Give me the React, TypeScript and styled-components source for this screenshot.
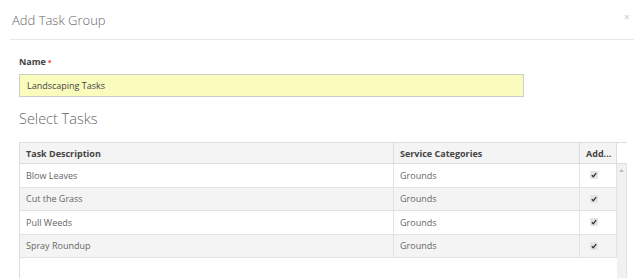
import React from 'react';
import styled, { createGlobalStyle } from 'styled-components';

const GlobalStyle = createGlobalStyle`
  html, body {
    margin: 0;
    padding: 0;
    background: #fff;
    font-family: "Open Sans", "Liberation Sans", sans-serif;
    color: #555;
  }
`;

const Modal = styled.div`
  width: 634px;
  height: 278px;
  overflow: hidden;
`;

const ModalHeader = styled.div`
  height: 40px;
  margin-left: 10px;
  border-bottom: 1px solid #e8e8e8;
  display: flex;
  align-items: center;
  justify-content: space-between;
  box-sizing: border-box;
`;

const ModalTitle = styled.h4`
  margin: 0 0 0 2px;
  font-size: 13px;
  font-weight: 300;
  color: #666;
`;

const CloseButton = styled.span`
  font-size: 11px;
  color: #ccc;
  margin-right: 4px;
  margin-top: -6px;
`;

const ModalBody = styled.div`
  padding: 15px 0 0 19px;
`;

const Label = styled.label`
  display: block;
  font-size: 9px;
  font-weight: 700;
  color: #444;
  margin-bottom: 6px;
`;

const Required = styled.span`
  color: #e55;
  margin-left: 2px;
`;

const TextInput = styled.input`
  display: block;
  box-sizing: border-box;
  width: 505px;
  height: 23px;
  padding: 0 7px;
  border: 1px solid #ccc;
  background: #f9fcbc;
  font-family: inherit;
  font-size: 9px;
  color: #444;
  outline: none;
`;

const SectionTitle = styled.h3`
  margin: 12px 0 14px;
  font-size: 14.5px;
  font-weight: 300;
  color: #666;
`;

const Grid = styled.div`
  width: 608px;
  height: 160px;
  box-sizing: border-box;
  border: 1px solid #ddd;
  border-right: 1px solid #e4e4e4;
  display: flex;
  flex-direction: column;
`;

const HeaderRow = styled.div`
  display: flex;
  height: 20px;
  border-bottom: 1px solid #ddd;
`;

const HeaderCell = styled.div<{ $w: number; $blank?: boolean }>`
  width: ${({ $w }) => $w}px;
  flex: none;
  box-sizing: border-box;
  padding-left: 6px;
  display: flex;
  align-items: center;
  font-size: 9px;
  font-weight: 700;
  color: #444;
  background: ${({ $blank }) => ($blank ? '#fff' : '#f4f4f4')};
  border-right: ${({ $blank }) => ($blank ? 'none' : '1px solid #ddd')};
  white-space: nowrap;
  overflow: hidden;
`;

const GridBody = styled.div`
  flex: 1;
  display: flex;
`;

const Rows = styled.div`
  width: 597px;
  flex: none;
`;

const Row = styled.div<{ $alt: boolean }>`
  display: flex;
  height: 22.5px;
  border-bottom: 1px solid #e2e2e2;
  background: ${({ $alt }) => ($alt ? '#f4f4f4' : '#fff')};
`;

const Cell = styled.div<{ $w: number; $check?: boolean }>`
  width: ${({ $w }) => $w}px;
  flex: none;
  box-sizing: border-box;
  padding-left: ${({ $check }) => ($check ? '10px' : '6px')};
  display: flex;
  align-items: center;
  font-size: 9px;
  color: #666;
  border-right: 1px solid #e2e2e2;
`;

const Scrollbar = styled.div`
  flex: 1;
  background: #f1f1f1;
  display: flex;
  justify-content: center;
  padding-top: 5px;
`;

const Check = styled.span`
  width: 8px;
  height: 8px;
  border-radius: 1px;
  background: #e4e4e4;
  display: flex;
  align-items: center;
  justify-content: center;
`;

const columns = [374, 186, 37];

const tasks = [
  { name: 'Blow Leaves', category: 'Grounds' },
  { name: 'Cut the Grass', category: 'Grounds' },
  { name: 'Pull Weeds', category: 'Grounds' },
  { name: 'Spray Roundup', category: 'Grounds' },
];

const CheckMark = () => (
  <Check>
    <svg width="6" height="6" viewBox="0 0 6 6">
      <path d="M0.8 3.2 L2.3 4.7 L5.2 1.2" fill="none" stroke="#333" strokeWidth="1.3" />
    </svg>
  </Check>
);

const App: React.FC = () => (
  <Modal>
    <GlobalStyle />
    <ModalHeader>
      <ModalTitle>Add Task Group</ModalTitle>
      <CloseButton>×</CloseButton>
    </ModalHeader>
    <ModalBody>
      <Label>
        Name<Required>•</Required>
      </Label>
      <TextInput defaultValue="Landscaping Tasks" />
      <SectionTitle>Select Tasks</SectionTitle>
      <Grid>
        <HeaderRow>
          <HeaderCell $w={columns[0]}>Task Description</HeaderCell>
          <HeaderCell $w={columns[1]}>Service Categories</HeaderCell>
          <HeaderCell $w={columns[2]}>Add...</HeaderCell>
          <HeaderCell $w={10} $blank />
        </HeaderRow>
        <GridBody>
          <Rows>
            {tasks.map((t, i) => (
              <Row key={t.name} $alt={i % 2 === 1}>
                <Cell $w={columns[0]}>{t.name}</Cell>
                <Cell $w={columns[1]}>{t.category}</Cell>
                <Cell $w={columns[2]} $check>
                  <CheckMark />
                </Cell>
              </Row>
            ))}
          </Rows>
          <Scrollbar>
            <svg width="5" height="3" viewBox="0 0 5 3">
              <path d="M0 3 L2.5 0 L5 3 Z" fill="#bbb" />
            </svg>
          </Scrollbar>
        </GridBody>
      </Grid>
    </ModalBody>
  </Modal>
);

export default App;
